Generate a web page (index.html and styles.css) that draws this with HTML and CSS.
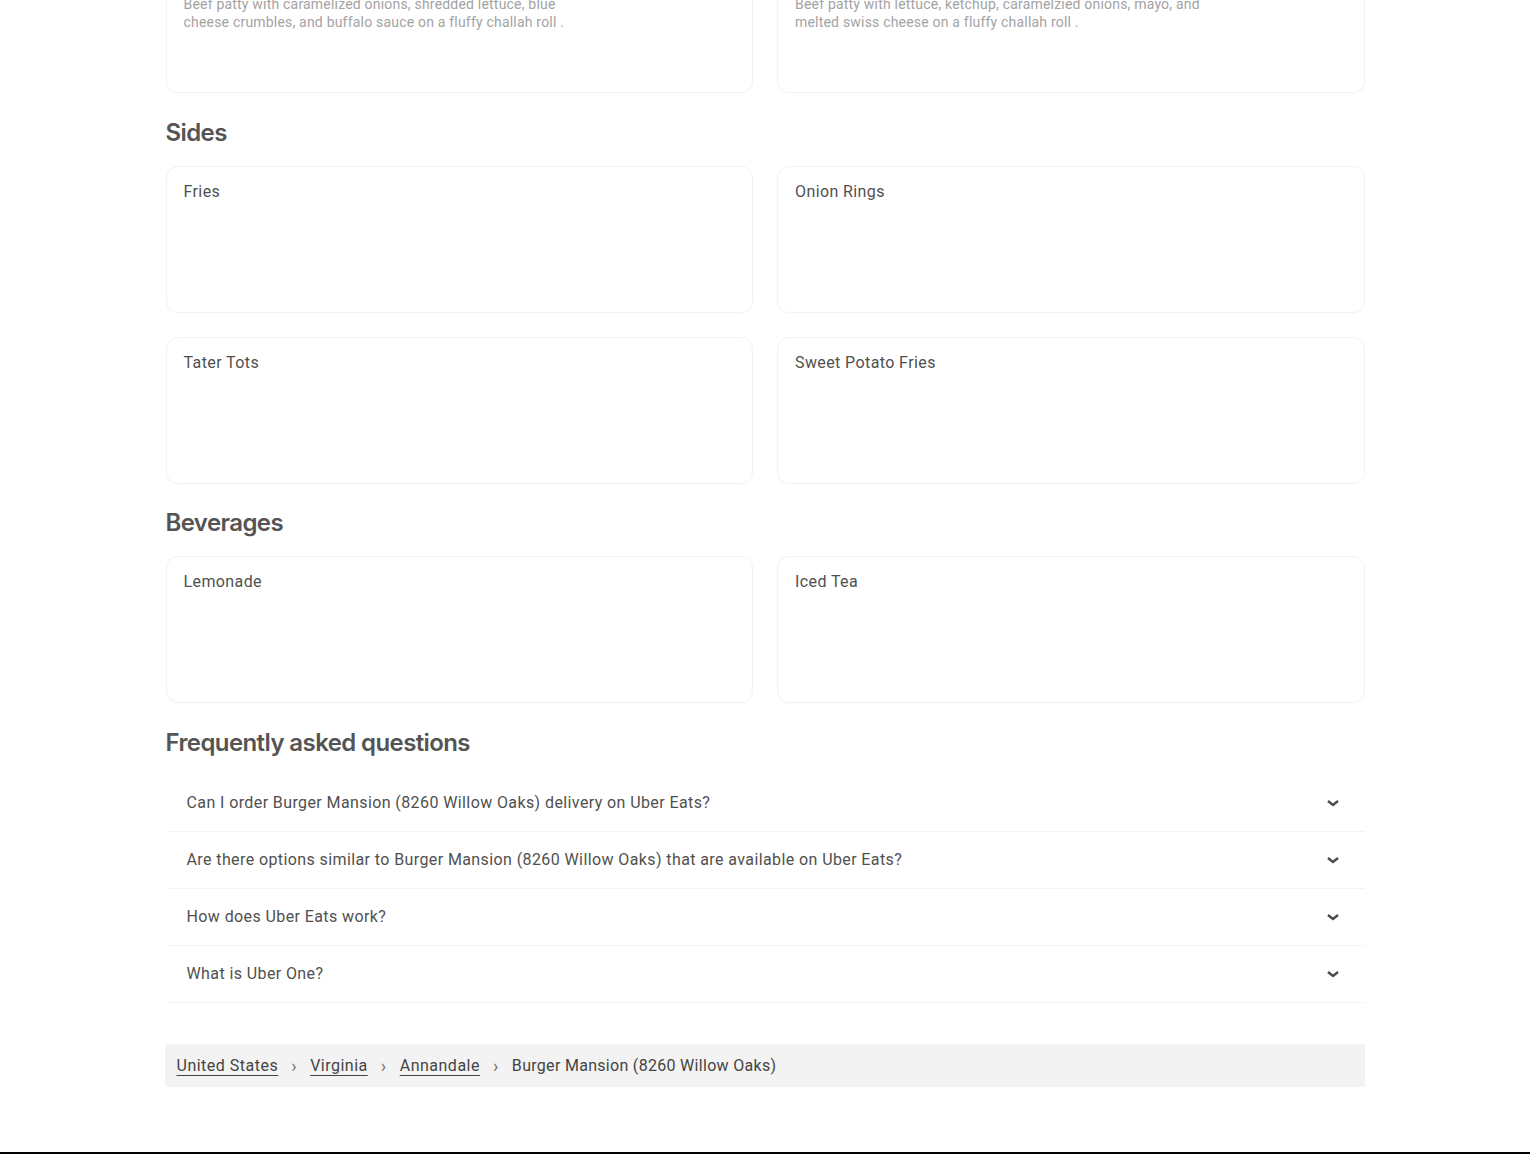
FILE: index.html
```html
<!DOCTYPE html>
<html lang="en">
<head>
    <meta charset="UTF-8">
    <meta name="viewport" content="width=device-width, initial-scale=1.0">
    <title>Burger Mansion (8260 Willow Oaks) - Menu</title>
    <link rel="stylesheet" href="styles.css">
</head>
<body>
    <div class="page">
        <div class="menu-grid first-grid">
            <div class="item-card">
                <div class="item-name">Buffalo Blue Burger</div>
                <div class="item-desc">Beef patty with caramelized onions, shredded lettuce, blue cheese crumbles, and buffalo sauce on a fluffy challah roll .</div>
            </div>
            <div class="item-card">
                <div class="item-name">Mansion Burger</div>
                <div class="item-desc">Beef patty with lettuce, ketchup, caramelzied onions, mayo, and melted swiss cheese on a fluffy challah roll .</div>
            </div>
        </div>

        <h2 class="section-title">Sides</h2>
        <div class="menu-grid">
            <div class="item-card"><div class="item-name">Fries</div></div>
            <div class="item-card"><div class="item-name">Onion Rings</div></div>
            <div class="item-card"><div class="item-name">Tater Tots</div></div>
            <div class="item-card"><div class="item-name">Sweet Potato Fries</div></div>
        </div>

        <h2 class="section-title bev-title">Beverages</h2>
        <div class="menu-grid">
            <div class="item-card"><div class="item-name">Lemonade</div></div>
            <div class="item-card"><div class="item-name">Iced Tea</div></div>
        </div>

        <h2 class="section-title faq-title">Frequently asked questions</h2>
        <div class="faq">
            <div class="faq-item">
                <span>Can I order Burger Mansion (8260 Willow Oaks) delivery on Uber Eats?</span>
                <svg class="chevron" width="14" height="10" viewBox="0 0 14 10"><path d="M2 3l5 4 5-4" fill="none" stroke="#4a4a4a" stroke-width="2.4"/></svg>
            </div>
            <div class="faq-item">
                <span>Are there options similar to Burger Mansion (8260 Willow Oaks) that are available on Uber Eats?</span>
                <svg class="chevron" width="14" height="10" viewBox="0 0 14 10"><path d="M2 3l5 4 5-4" fill="none" stroke="#4a4a4a" stroke-width="2.4"/></svg>
            </div>
            <div class="faq-item">
                <span>How does Uber Eats work?</span>
                <svg class="chevron" width="14" height="10" viewBox="0 0 14 10"><path d="M2 3l5 4 5-4" fill="none" stroke="#4a4a4a" stroke-width="2.4"/></svg>
            </div>
            <div class="faq-item">
                <span>What is Uber One?</span>
                <svg class="chevron" width="14" height="10" viewBox="0 0 14 10"><path d="M2 3l5 4 5-4" fill="none" stroke="#4a4a4a" stroke-width="2.4"/></svg>
            </div>
        </div>

        <div class="breadcrumbs">
            <a href="#">United States</a>
            <span class="sep">›</span>
            <a href="#">Virginia</a>
            <span class="sep">›</span>
            <a href="#">Annandale</a>
            <span class="sep">›</span>
            <span class="current">Burger Mansion (8260 Willow Oaks)</span>
        </div>
    </div>
    <div class="footer"></div>
</body>
</html>
```

FILE: styles.css
```css
body {
    font-family: Roboto, "Liberation Sans", sans-serif;
    margin: 0;
    padding: 0;
    background-color: #ffffff;
    color: #545454;
    letter-spacing: 0.4px;
}
.page {
    width: 1199px;
    margin: 0 auto;
}
.menu-grid {
    display: grid;
    grid-template-columns: 1fr 1fr;
    gap: 24px;
}
.first-grid {
    margin-top: -54px;
}
.item-card {
    height: 113px;
    padding: 16px 17px;
    border: 1px solid #f2f2f2;
    border-radius: 12px;
    box-shadow: 0 1px 2px rgba(0, 0, 0, 0.02);
}
.item-name {
    font-size: 16px;
    line-height: 18px;
    color: #505050;
    margin-bottom: 14px;
}
.item-desc {
    max-width: 420px;
    font-size: 14px;
    line-height: 18px;
    letter-spacing: 0.2px;
    color: #a3a3a3;
}
.section-title {
    font-family: Inter, "Open Sans", sans-serif;
    font-size: 24px;
    font-weight: 600;
    letter-spacing: -0.6px;
    line-height: 32px;
    color: #545454;
    margin: 24px 0 17px;
}
.bev-title {
    margin-top: 23px;
}
.faq-title {
    margin-bottom: 16px;
}
.faq-item {
    display: flex;
    justify-content: space-between;
    align-items: center;
    padding: 16px 25px 16px 21px;
    line-height: 24px;
    font-size: 16px;
    color: #505050;
    border-bottom: 1px solid #f3f3f3;
}
.breadcrumbs {
    display: flex;
    align-items: center;
    gap: 13px;
    margin: 41px 0 65px -1px;
    padding: 10px 12px;
    background-color: #f3f3f3;
    border-radius: 2px;
    font-size: 16px;
    line-height: 23px;
    letter-spacing: 0.5px;
}
.breadcrumbs a {
    color: #444444;
    text-decoration: underline;
    text-underline-offset: 4px;
    text-decoration-thickness: 1px;
}
.breadcrumbs .sep {
    color: #777777;
    font-size: 18px;
}
.breadcrumbs .current {
    color: #444444;
    letter-spacing: 0.3px;
}
.footer {
    height: 200px;
    background-color: #000000;
}
```
